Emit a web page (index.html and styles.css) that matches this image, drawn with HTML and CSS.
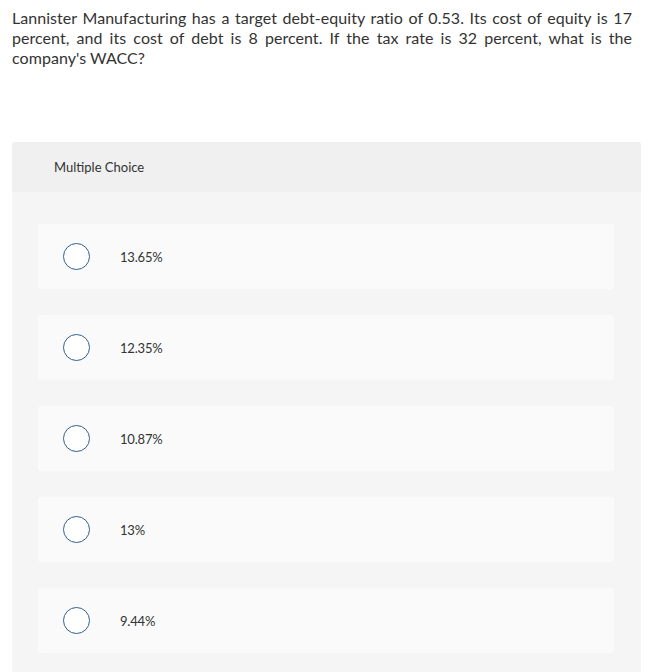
FILE: index.html
```html
<!DOCTYPE html>
<html>
<head>
<meta charset="utf-8">
<link rel="stylesheet" href="styles.css">
</head>
<body>
<div class="page">
  <p class="question">Lannister Manufacturing has a target debt-equity ratio of 0.53. Its cost of equity is 17 percent, and its cost of debt is 8 percent. If the tax rate is 32 percent, what is the company's WACC?</p>
  <div class="panel">
    <div class="panel-head">Multiple Choice</div>
    <div class="panel-body">
      <div class="option"><span class="radio"></span><span class="label">13.65%</span></div>
      <div class="option"><span class="radio"></span><span class="label">12.35%</span></div>
      <div class="option"><span class="radio"></span><span class="label">10.87%</span></div>
      <div class="option"><span class="radio"></span><span class="label">13%</span></div>
      <div class="option"><span class="radio"></span><span class="label">9.44%</span></div>
    </div>
  </div>
</div>
</body>
</html>
```
FILE: styles.css
```css
html, body {
  margin: 0;
  padding: 0;
  background: #ffffff;
}
.page {
  padding: 8px 13px 0 12px;
  font-family: Lato, "Open Sans", sans-serif;
  color: #333333;
}
.question {
  margin: 0 9px 0 0;
  font-size: 16px;
  letter-spacing: 0.05px;
  line-height: 20px;
  text-align: justify;
}
.panel {
  margin-top: 74px;
  border-radius: 3px;
  overflow: hidden;
  background: #f5f5f5;
}
.panel-head {
  height: 50px;
  background: #f0f0f0;
  display: flex;
  align-items: center;
  padding-left: 42px;
  font-size: 13px;
}
.panel-body {
  padding: 32px 27px 20px 26px;
  display: flex;
  flex-direction: column;
  gap: 26px;
}
.option {
  height: 65px;
  background: #fafafa;
  border-radius: 3px;
  display: flex;
  align-items: center;
  padding-left: 25px;
}
.radio {
  width: 25px;
  height: 25px;
  border: 1.5px solid #2f5f8f;
  border-radius: 50%;
  background: #ffffff;
  flex: none;
}
.label {
  margin-left: 30px;
  font-size: 13px;
  letter-spacing: -0.2px;
}
```
